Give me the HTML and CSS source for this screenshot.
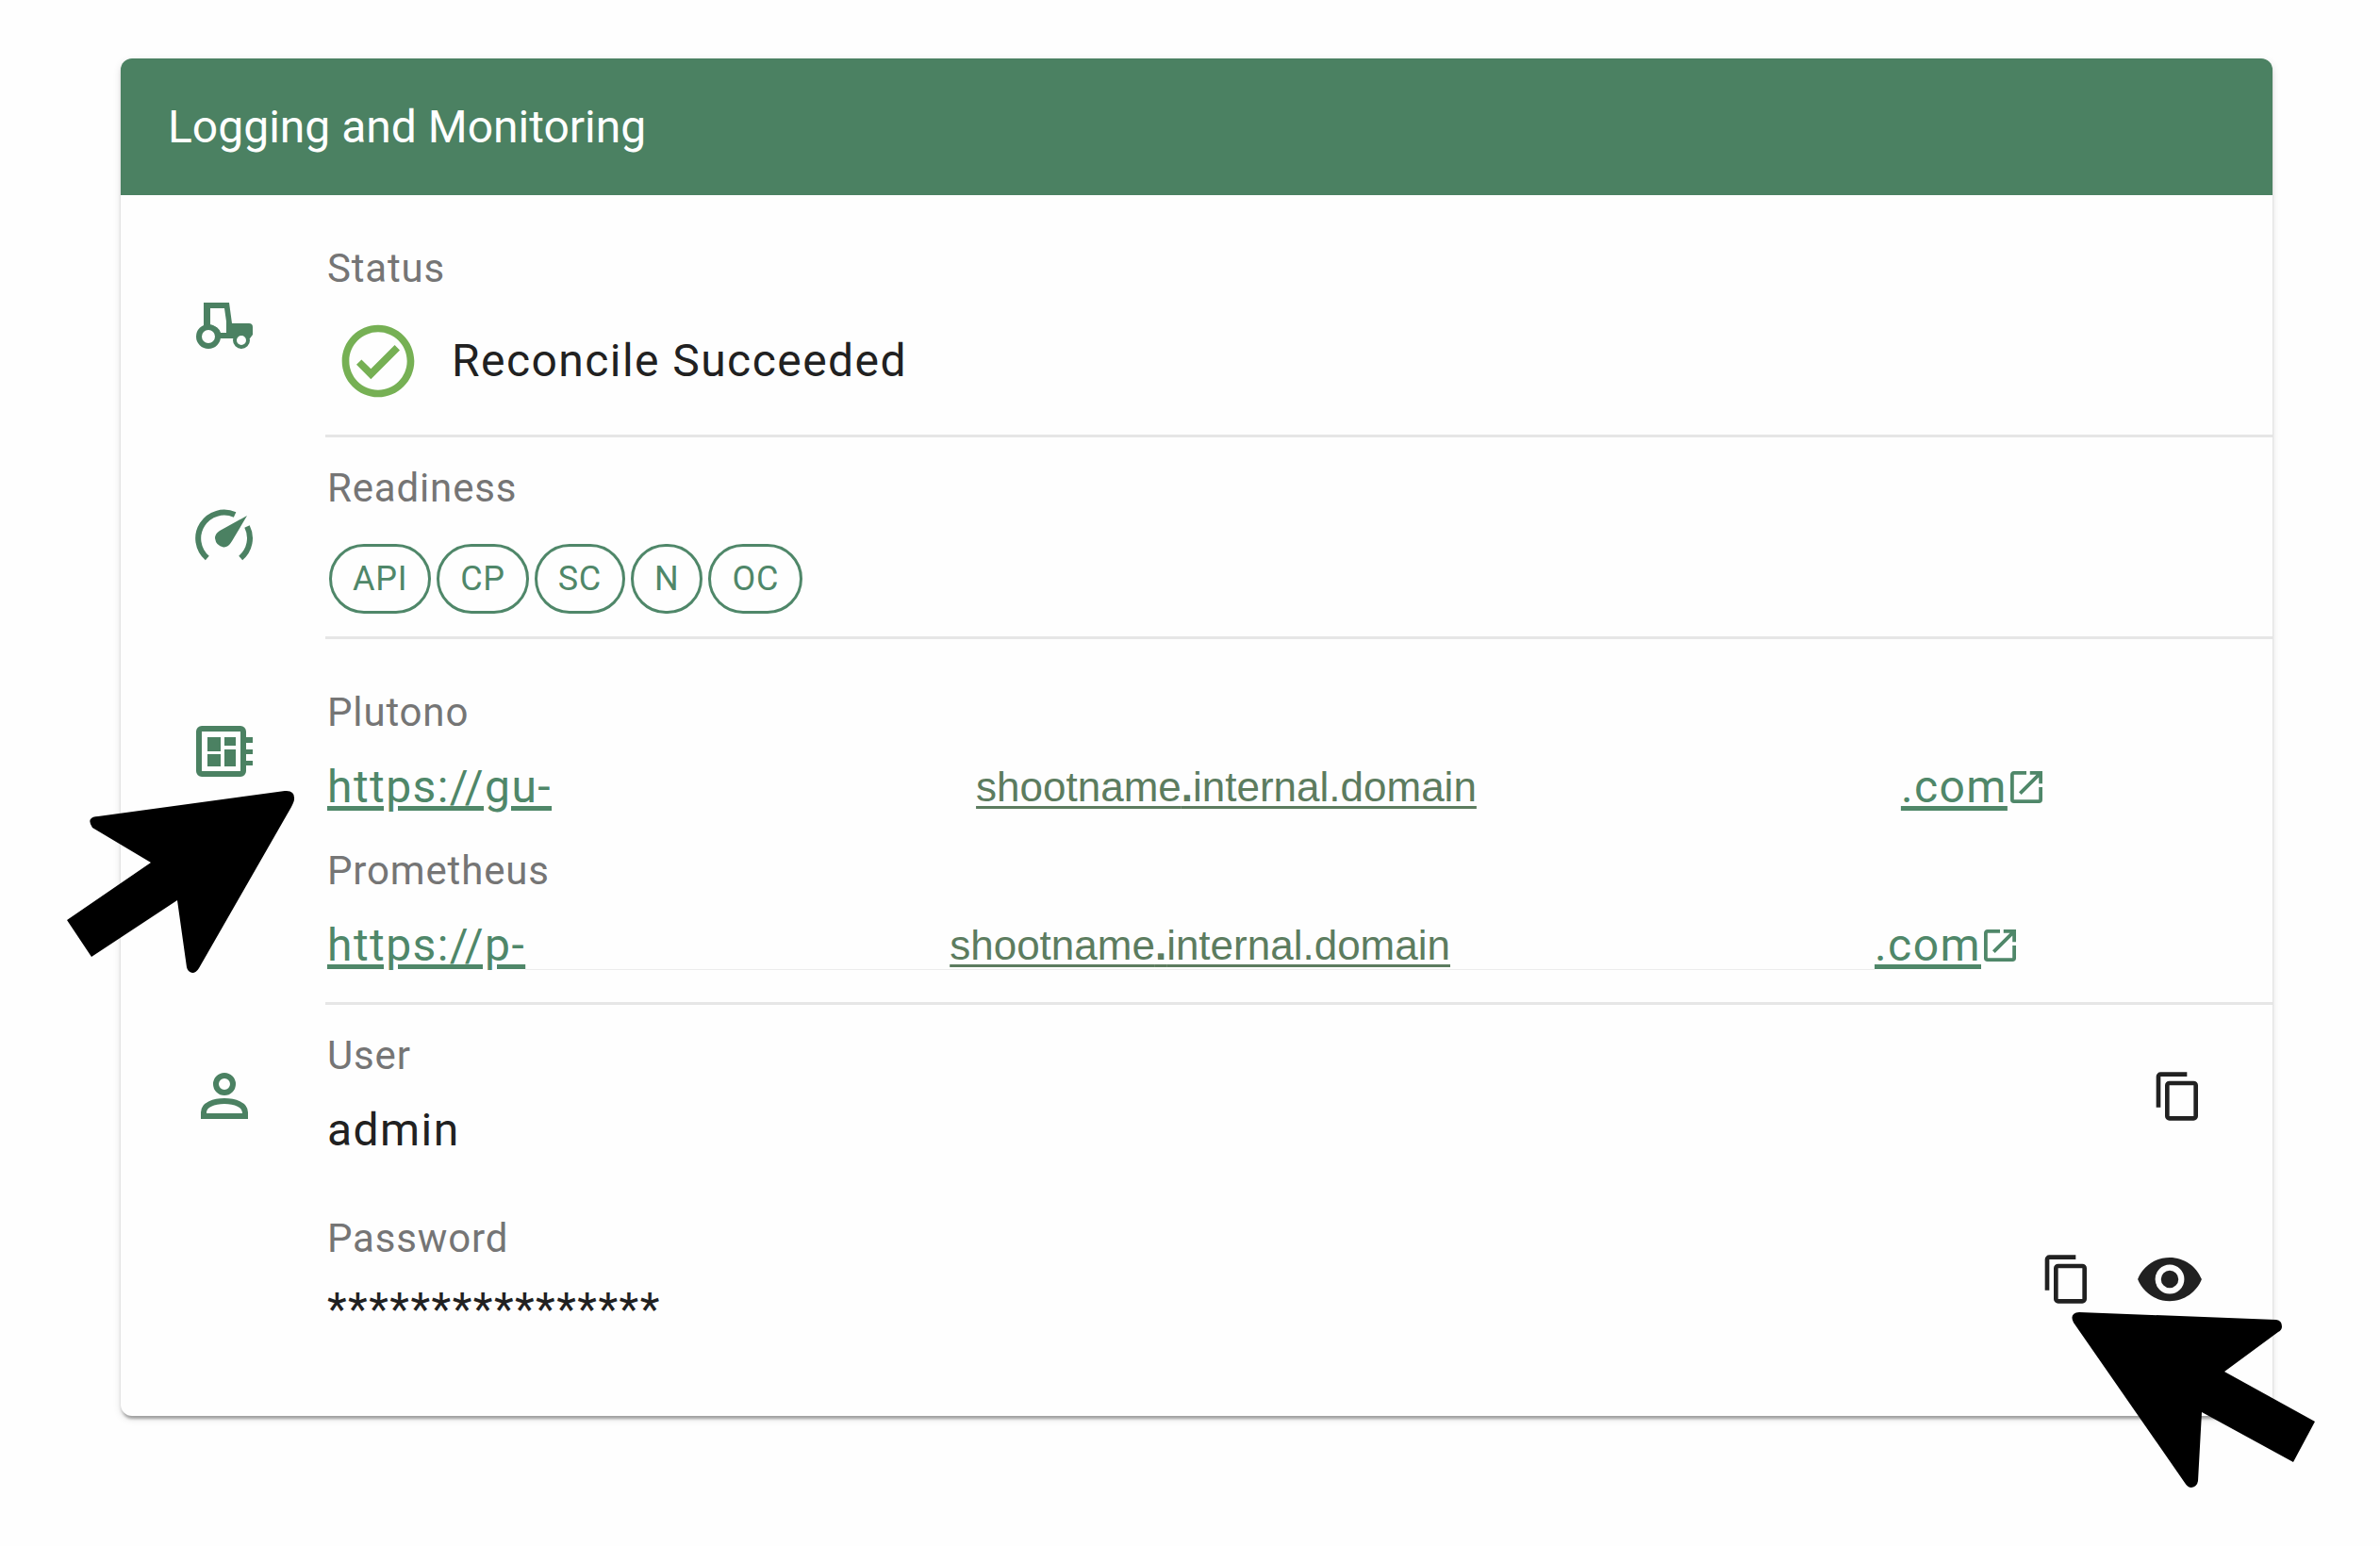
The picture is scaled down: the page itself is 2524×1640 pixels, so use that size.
FILE: index.html
```html
<!DOCTYPE html>
<html lang="en">
<head>
<meta charset="utf-8">
<title>Logging and Monitoring</title>
<link rel="stylesheet" href="styles.css">
</head>
<body>
<main class="card">
  <h1 class="card-title">Logging and Monitoring</h1>

  <section class="section section--status">
    <svg class="section-icon" viewBox="0 -3 90 90" aria-hidden="true">
      <path class="fill" fill-rule="evenodd" d="M21 21H48L51 43H69Q73 43 73 47V55L70 59H38L36 52L21 46ZM28 27V45Q37 46 39 53H45V41L43 27Z"/>
      <circle class="disc" cx="26" cy="57" r="10"/>
      <circle class="disc disc--small" cx="61" cy="61" r="7"/>
    </svg>
    <div class="field">
      <h2 class="label">Status</h2>
      <div class="status">
        <svg class="status-icon" viewBox="0 0 24 24" aria-hidden="true"><path d="M12 2C6.5 2 2 6.500 2 12S6.500 22 12 22 22 17.500 22 12 17.500 2 12 2M12 20C7.590 20 4 16.410 4 12S7.590 4 12 4 20 7.590 20 12 16.410 20 12 20M16.590 7.580L10 14.170L7.410 11.590L6 13L10 17L18 9L16.590 7.580Z"/></svg>
        <span class="value">Reconcile Succeeded</span>
      </div>
    </div>
  </section>

  <section class="section section--readiness">
    <svg class="section-icon" viewBox="0 0 90 90" aria-hidden="true">
      <path class="line" d="M24.800 67A27.500 27.500 0 0 1 54.100 21.100M67 33.500A27.500 27.500 0 0 1 60.200 67"/>
      <path class="fill" d="M67 22L51 49Q47 56 42 55.500Q34 54 33 46Q33 41 38 38Z"/>
    </svg>
    <div class="field">
      <h2 class="label">Readiness</h2>
      <div class="chips">
        <button class="chip" type="button">API</button>
        <button class="chip" type="button">CP</button>
        <button class="chip" type="button">SC</button>
        <button class="chip" type="button">N</button>
        <button class="chip" type="button">OC</button>
      </div>
    </div>
  </section>

  <section class="section section--links">
    <svg class="section-icon" viewBox="0 0 90 90" aria-hidden="true">
      <rect class="line" x="16" y="19" width="47" height="48" rx="3"/>
      <path class="fill" d="M25 28H39V43H25ZM43 28H55V37H43ZM25 46H39V59H25ZM43 41H55V59H43ZM65 28H73V34H65ZM65 41H73V46H65ZM65 53H73V58H65Z"/>
    </svg>
    <div class="field">
      <h2 class="label">Plutono</h2>
      <a class="link" href="#plutono">
        <span class="link-part">https://gu-</span>
        <span class="host">shootname<b>.</b>internal.domain</span>
        <span class="link-end"><span class="link-part">.com</span><svg class="external" viewBox="3 3 18 18" aria-hidden="true"><path d="M14 3V5H17.590L7.760 14.830L9.170 16.240L19 6.410V10H21V3M19 19H5V5H12V3H5C3.890 3 3 3.900 3 5V19A2 2 0 0 0 5 21H19A2 2 0 0 0 21 19V12H19V19Z"/></svg></span>
      </a>
    </div>
    <div class="field field--second">
      <h2 class="label">Prometheus</h2>
      <a class="link link--ruled" href="#prometheus">
        <span class="link-part">https://p-</span>
        <span class="host">shootname<b>.</b>internal.domain</span>
        <span class="link-end"><span class="link-part">.com</span><svg class="external" viewBox="3 3 18 18" aria-hidden="true"><path d="M14 3V5H17.590L7.760 14.830L9.170 16.240L19 6.410V10H21V3M19 19H5V5H12V3H5C3.890 3 3 3.900 3 5V19A2 2 0 0 0 5 21H19A2 2 0 0 0 21 19V12H19V19Z"/></svg></span>
      </a>
    </div>
  </section>

  <section class="section section--login">
    <svg class="section-icon" viewBox="-1 -2 90 90" aria-hidden="true">
      <circle class="line" cx="42" cy="30" r="9"/>
      <path class="line" d="M20 64V60C20 44 64 44 64 60V64Z"/>
    </svg>
    <div class="field">
      <h2 class="label">User</h2>
      <div class="value">admin</div>
    </div>
    <div class="actions">
      <button class="icon-button" type="button" aria-label="Copy user"><svg class="copy" viewBox="0 0 24 24"><path d="M19 21H8V7H19M19 5H8A2 2 0 0 0 6 7V21A2 2 0 0 0 8 23H19A2 2 0 0 0 21 21V7A2 2 0 0 0 19 5M16 1H4A2 2 0 0 0 2 3V17H4V3H16V1Z"/></svg></button>
    </div>
    <div class="field field--second">
      <h2 class="label">Password</h2>
      <div class="value value--masked">****************</div>
    </div>
    <div class="actions">
      <button class="icon-button" type="button" aria-label="Copy password"><svg class="copy" viewBox="0 0 24 24"><path d="M19 21H8V7H19M19 5H8A2 2 0 0 0 6 7V21A2 2 0 0 0 8 23H19A2 2 0 0 0 21 21V7A2 2 0 0 0 19 5M16 1H4A2 2 0 0 0 2 3V17H4V3H16V1Z"/></svg></button>
      <button class="icon-button" type="button" aria-label="Show password"><svg class="eye" viewBox="0 0 24 24"><path d="M12 9A3 3 0 0 0 9 12A3 3 0 0 0 12 15A3 3 0 0 0 15 12A3 3 0 0 0 12 9M12 17A5 5 0 0 1 7 12A5 5 0 0 1 12 7A5 5 0 0 1 17 12A5 5 0 0 1 12 17M12 4.500C7 4.500 2.730 7.610 1 12C2.730 16.390 7 19.500 12 19.500C17 19.500 21.270 16.390 23 12C21.270 7.610 17 4.500 12 4.500Z"/></svg></button>
    </div>
  </section>

  <svg class="pointer pointer--links" viewBox="71 838 242 195" aria-hidden="true"><path d="M302 839Q313 838 312 848Q312 850 309 856L211 1027Q208 1032 204 1032Q199 1031 198 1026L188 955L97 1015L71 976L160 915L98 878Q94 872 96 869Q98 866 104 866Z"/></svg>
  <svg class="pointer pointer--copy" viewBox="2197 1391 259 188" aria-hidden="true"><path d="M2205 1392L2414 1400Q2420 1401 2420 1407Q2420 1411 2416 1413L2359 1455L2455 1508L2432 1551L2335 1498L2331 1571Q2330 1577 2324 1578Q2320 1578 2317 1573L2199 1403Q2194 1393 2205 1392Z"/></svg>
</main>
</body>
</html>
```
FILE: styles.css
```css
:root {
  --green: #4b8162;
  --link: #4f8769;
  --host: #5c7c5f;
  --text: #212121;
  --muted: #757575;
  --rule: #e6e6e6;
}

* {
  box-sizing: border-box;
}

body {
  margin: 0;
  padding: 62px 114px 138px 128px;
  background: #fefefe;
  color: var(--text);
  font-family: Roboto, "Liberation Sans", sans-serif;
  font-size: 48px;
  line-height: 72px;
}

svg {
  display: block;
  flex: none;
}

.card {
  position: relative;
  background: #fefefe;
  border-radius: 12px;
  box-shadow: 0 6px 3px -3px rgba(0, 0, 0, 0.2), 0 3px 3px rgba(0, 0, 0, 0.14), 0 3px 9px rgba(0, 0, 0, 0.12);
}

.card-title {
  margin: 0;
  padding: 37px 50px 36px;
  background: var(--green);
  border-radius: 12px 12px 0 0;
  color: #fff;
  font-size: 48px;
  font-weight: 400;
}

.section {
  position: relative;
  display: grid;
  grid-template-columns: 90px 1fr auto;
  column-gap: 62px;
  align-items: center;
  padding: 24px 72px 24px 67px;
}

/* divider starts at the text column */
.section:not(.section--login) {
  border-bottom: 3px solid;
  border-image: linear-gradient(to right, transparent 219px, var(--rule) 219px) 3;
}

.section--status {
  padding-top: 48px;
  padding-bottom: 32px;
}

.section--links {
  padding-top: 48px;
  row-gap: 23px;
}

.section--login {
  padding-bottom: 73px;
  row-gap: 49px;
}

.section-icon {
  width: 90px;
  height: 90px;
}

.fill {
  fill: var(--green);
}

.line {
  fill: none;
  stroke: var(--green);
  stroke-width: 6px;
}

.disc {
  fill: #fefefe;
  stroke: var(--green);
  stroke-width: 6px;
}

.disc--small {
  stroke-width: 4px;
}

.field {
  display: grid;
  row-gap: 13px;
  grid-column: 2;
}

.section--readiness .field {
  row-gap: 29px;
}

.section--status .field {
  row-gap: 22px;
}

.label {
  margin: 0;
  color: var(--muted);
  font-size: 42px;
  font-weight: 400;
  line-height: 60px;
  letter-spacing: 0.02em;
}

.value,
.link-part {
  letter-spacing: 0.03em;
}

.value--masked {
  padding-bottom: 8px;
  line-height: 64px;
}

.status {
  display: flex;
  align-items: center;
  gap: 32px;
  padding-left: 8px;
}

.status-icon {
  width: 92px;
  height: 92px;
  fill: #76b054;
}

.chips {
  display: flex;
  gap: 6px;
  padding-left: 2px;
}

.chip {
  height: 74px;
  padding: 0 22px;
  border: 3px solid var(--link);
  border-radius: 37px;
  background: transparent;
  color: var(--link);
  font: 400 36px/40px Roboto, "Liberation Sans", sans-serif;
  letter-spacing: 0.02em;
}

.link {
  display: flex;
  justify-self: start;
  gap: clamp(16px, 18vw, 450px);
  color: var(--link);
  text-decoration: none;
}

.link--ruled {
  background: linear-gradient(#ececec, #ececec) 0 61px / 100% 1px no-repeat;
}

.link-part {
  background: #fefefe;
  text-decoration: underline 5px;
  text-underline-offset: 4px;
}

.host {
  color: var(--host);
  font-family: "Liberation Sans", Arial, sans-serif;
  font-size: 44px;
  text-decoration: underline 3px;
  text-underline-offset: 5px;
}

.link-end {
  display: flex;
  align-items: center;
  gap: 3px;
  background: #fefefe;
}

.external {
  width: 34px;
  height: 34px;
  fill: var(--link);
}

.actions {
  display: flex;
  grid-column: 3;
  align-items: center;
  justify-content: flex-end;
  gap: 44px;
}

.icon-button {
  display: flex;
  padding: 0;
  border: 0;
  background: none;
}

.copy {
  width: 56px;
  height: 56px;
  fill: var(--text);
}

.eye {
  width: 74px;
  height: 74px;
  fill: var(--text);
}

.pointer {
  position: absolute;
  fill: #000;
}

.pointer--links {
  top: 776px;
  left: -57px;
  width: 242px;
  height: 195px;
}

.pointer--copy {
  top: 1329px;
  right: -46px;
  width: 259px;
  height: 188px;
}
```
